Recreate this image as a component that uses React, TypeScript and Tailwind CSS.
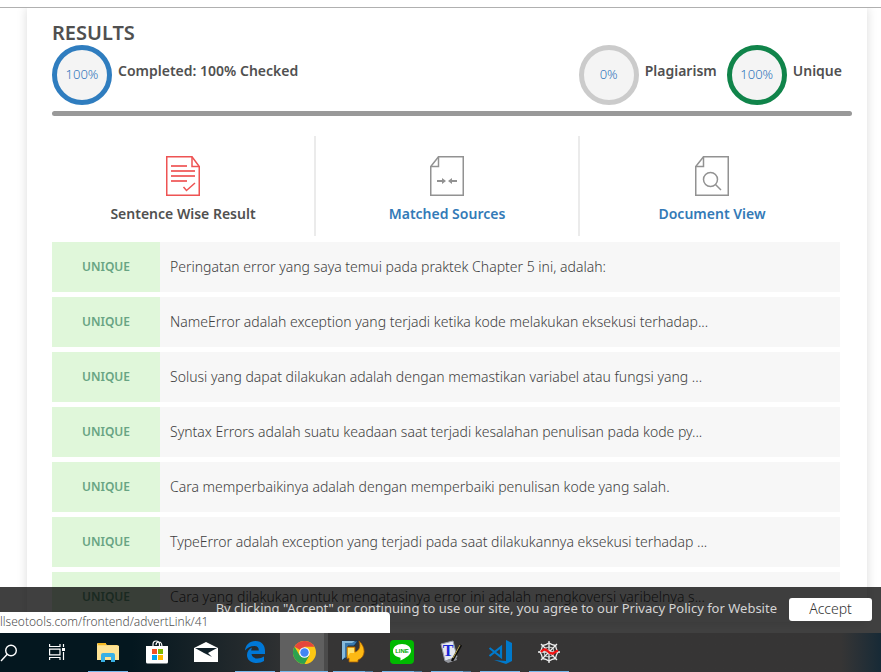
import type { ReactNode } from "react";

const sentences = [
  "Peringatan error yang saya temui pada praktek Chapter 5 ini, adalah:",
  "NameError adalah exception yang terjadi ketika kode melakukan eksekusi terhadap...",
  "Solusi yang dapat dilakukan adalah dengan memastikan variabel atau fungsi yang ...",
  "Syntax Errors adalah suatu keadaan saat terjadi kesalahan penulisan pada kode py...",
  "Cara memperbaikinya adalah dengan memperbaiki penulisan kode yang salah.",
  "TypeError adalah exception yang terjadi pada saat dilakukannya eksekusi terhadap ...",
  "Cara yang dilakukan untuk mengatasinya error ini adalah mengkoversi varibelnya s...",
];

function Gauge({ value, label, ring }: { value: string; label: string; ring: string }) {
  return (
    <div className="flex gap-1.5">
      <div
        className={`flex size-[60px] shrink-0 items-center justify-center rounded-full border-[5px] bg-[#f4f4f4] text-[13px] font-light text-[#2f74bb] ${ring}`}
      >
        {value}
      </div>
      <span className="pt-4 text-sm leading-5 font-semibold whitespace-nowrap text-[#505050]">{label}</span>
    </div>
  );
}

function SentenceIcon() {
  return (
    <svg width="34" height="40" viewBox="0 0 34 40" fill="none" stroke="#ee5353" strokeWidth="1.5" aria-hidden="true">
      <path d="M.75.75H26L33.25 10.5V39.25H.75Z" />
      <path d="M26 .75V10.5H33" />
      <path d="M5 10H21M5 15H29M5 20H29M5 25H21" strokeWidth="2" opacity=".85" />
      <path d="M17.5 31L20.5 34.5L29 27" />
    </svg>
  );
}

function MatchedIcon() {
  return (
    <svg width="34" height="40" viewBox="0 0 34 40" fill="none" stroke="#929292" strokeWidth="1.5" aria-hidden="true">
      <path d="M8.5.75H33.25V39.25H.75V10.5Z" />
      <path d="M8.5.75V10.5H1" />
      <path d="M7 25H13M21 25H27" strokeWidth="2" />
      <path d="M12 22L16 25L12 28ZM22 22L18 25L22 28Z" fill="#929292" stroke="none" />
    </svg>
  );
}

function ViewIcon() {
  return (
    <svg width="34" height="40" viewBox="0 0 34 40" fill="none" stroke="#929292" strokeWidth="1.5" aria-hidden="true">
      <path d="M8.5.75H33.25V39.25H.75V10.5Z" />
      <path d="M8.5.75V10.5H1" />
      <circle cx="15.5" cy="23.5" r="7" />
      <path d="M20.5 28.5L26 34" />
    </svg>
  );
}

function Tab({ icon, label, active, last }: { icon: ReactNode; label: string; active?: boolean; last?: boolean }) {
  return (
    <button
      type="button"
      className={`flex h-[100px] flex-col items-center gap-2 pt-5 ${last ? "" : "border-r-2 border-[#ebebeb]"} ${active ? "text-[#505050]" : "text-[#337ab7]"}`}
    >
      {icon}
      <span className="text-sm leading-5 font-semibold">{label}</span>
    </button>
  );
}

function SearchGlyph() {
  return (
    <svg width="18" height="18" viewBox="0 0 18 18" fill="none" stroke="#fff" strokeWidth="1.4">
      <circle cx="11" cy="6.5" r="5.3" />
      <path d="M7.2 10.3L1 17" />
    </svg>
  );
}

function TaskViewGlyph() {
  return (
    <svg width="20" height="16" viewBox="0 0 20 16" fill="none" stroke="#fff" strokeWidth="1.2">
      <path d="M.6 0V2.500H11V0M.6 16V13.500H11V16M.6 5.200H11V10.800H.6ZM14.500 0V3M14.500 8V16" />
      <path d="M13 4H16V7H13Z" fill="#fff" stroke="none" />
    </svg>
  );
}

function FolderGlyph() {
  return (
    <svg width="22" height="20" viewBox="0 0 22 20">
      <path d="M0 2Q0 1 1 1H8L10 3H20Q22 3 22 5V17H0Z" fill="#fbd978" />
      <path d="M1 1H9V3H1Z" fill="#f6b921" />
      <path d="M0 4H22V18H0Z" fill="#fee394" />
      <path d="M4 20V13Q4 11 6 11H16Q18 11 18 13V20H14V15H8V20Z" fill="#38b0e5" />
    </svg>
  );
}

function StoreGlyph() {
  return (
    <svg width="24" height="24" viewBox="0 0 24 24">
      <path d="M8 7V4.500Q8 1 11 1Q14.500 1 14.500 4.500V7M11 5Q11 2 14 2Q17 2 17 7" fill="none" stroke="#fff" strokeWidth="1.2" />
      <path d="M1 6H23V22Q23 23.500 21.500 23.500H2.500Q1 23.500 1 22Z" fill="#fff" />
      <path d="M7 9H12V14H7Z" fill="#f25022" />
      <path d="M13 9H18V14H13Z" fill="#7fba00" />
      <path d="M7 15H12V20H7Z" fill="#00a4ef" />
      <path d="M13 15H18V20H13Z" fill="#ffb900" />
    </svg>
  );
}

function MailGlyph() {
  return (
    <svg width="24" height="20" viewBox="0 0 24 20">
      <path d="M0 6L12 0L24 6V20H0Z" fill="#fff" />
      <path d="M1 6H23L14 11L18 15L10 11Z" fill="#102029" />
    </svg>
  );
}

function EdgeGlyph() {
  return (
    <svg width="22" height="22" viewBox="0 0 22 22">
      <path
        d="M1 9.500C1.500 4 5.500 0 11.500 0C18 0 21 4.500 21 10V13H7.500C8 16 10.500 17.500 13.500 17.500C16 17.500 18 16.800 20 15.600V20C18 21.300 15.500 22 12.500 22C6.500 22 3 18.500 3 14C3 10.500 5 8 8 6.500C7.500 7.500 7.200 8.500 7.200 9.500H14.800C14.800 6.500 13.500 5 10.500 5C6.500 5 3 7 1 9.500Z"
        fill="#0078d7"
      />
    </svg>
  );
}

function ChromeGlyph() {
  return (
    <svg width="23" height="23" viewBox="0 0 24 24">
      <circle cx="12" cy="12" r="12" fill="#fbc714" />
      <path d="M12 12L1.600 6A12 12 0 0 1 22.400 6H12Z" fill="#e5473b" />
      <path d="M1.600 6A12 12 0 0 0 12 24L17 15L12 12L7 15Z" fill="#2ca24f" />
      <circle cx="12" cy="12" r="5.600" fill="#fff" />
      <circle cx="12" cy="12" r="4.400" fill="#4286f4" />
    </svg>
  );
}

function TransferGlyph() {
  return (
    <svg width="24" height="24" viewBox="0 0 24 24">
      <path d="M1 1H17L13 6H7V17L1 20Z" fill="#3979ae" stroke="#14304c" />
      <path d="M1 1H14L11 3H4V17L1 20Z" fill="#85b9dc" />
      <path d="M6 7H14V12C18 11 20 7 18 1C25 7 25 17 17 20V22H8V18L6 19Z" fill="#fdb913" stroke="#a45a05" strokeWidth=".8" />
      <path d="M7 8H13V13H9L7 16Z" fill="#ffe06a" />
    </svg>
  );
}

function LineGlyph() {
  return (
    <svg width="24" height="24" viewBox="0 0 24 24">
      <rect width="24" height="24" rx="4" fill="#00b900" />
      <path d="M12 4C6.500 4 3 7 3 11C3 14.500 6 17 10.500 17.700V20.500C16 18 21 14.500 21 11C21 7 17.500 4 12 4Z" fill="#fff" />
      <text x="12" y="13" textAnchor="middle" fontSize="6" fontWeight="800" fill="#00a900" fontFamily="Liberation Sans, sans-serif">
        LINE
      </text>
    </svg>
  );
}

function TextGlyph() {
  return (
    <svg width="24" height="24" viewBox="0 0 24 24">
      <path d="M2 4L14 1L18 17L6 21Z" fill="#e4e7ef" stroke="#9599a5" />
      <path d="M6 21L17 17L18 20L9 23Z" fill="#92959c" />
      <text x="9" y="16" textAnchor="middle" fontSize="16" fontWeight="700" fill="#1825d7" fontFamily="Liberation Serif, serif">
        T
      </text>
      <path d="M22 5L13 21" stroke="#0c0c0c" strokeWidth="2.500" />
      <path d="M21 5L14 18" stroke="#b5a04c" />
    </svg>
  );
}

function CodeGlyph() {
  return (
    <svg width="24" height="24" viewBox="0 0 24 24">
      <path d="M18 0L24 3V21L18 24L6 20L18 21Z" fill="#0079cb" />
      <path d="M1.500 8L13 17V7L1.500 16" fill="none" stroke="#0079cb" strokeWidth="2.200" />
    </svg>
  );
}

function WebGlyph() {
  return (
    <svg width="24" height="24" viewBox="0 0 24 24" fill="none" stroke="#eee" strokeWidth="1.300">
      <path d="M12 1V23M1 12H23M4 4L20 20M20 4L4 20" />
      <path d="M12 3Q15 5 18.500 5.500Q19 9 21 12Q19 15 18.500 18.500Q15 19 12 21Q9 19 5.500 18.500Q5 15 3 12Q5 9 5.500 5.500Q9 5 12 3Z" />
      <path d="M12 7L16 8L17 12L16 16L12 17L8 16L7 12L8 8Z" strokeWidth=".8" />
      <path d="M4 12Q7 8 10 10.500Q13 14 16 13.500Q18 12 21 10.500" stroke="#f01414" strokeWidth="2.400" />
    </svg>
  );
}

const tasks: { name: string; icon: ReactNode; state: "idle" | "open" | "active" | "stack" }[] = [
  { name: "Task view", icon: <TaskViewGlyph />, state: "idle" },
  { name: "File Explorer", icon: <FolderGlyph />, state: "open" },
  { name: "Store", icon: <StoreGlyph />, state: "idle" },
  { name: "Mail", icon: <MailGlyph />, state: "idle" },
  { name: "Edge", icon: <EdgeGlyph />, state: "open" },
  { name: "Chrome", icon: <ChromeGlyph />, state: "active" },
  { name: "File transfer", icon: <TransferGlyph />, state: "stack" },
  { name: "LINE", icon: <LineGlyph />, state: "stack" },
  { name: "Text editor", icon: <TextGlyph />, state: "stack" },
  { name: "Visual Studio Code", icon: <CodeGlyph />, state: "open" },
  { name: "Spyder", icon: <WebGlyph />, state: "open" },
];

const taskStyle = {
  idle: "",
  open: "",
  active: "bg-[linear-gradient(to_right,#606060_44px,#4b4b4b_44px)]",
  stack: "",
};

const lineStyle = {
  idle: "h-px w-0",
  open: "h-px w-10 bg-[#76b9ed]",
  active: "h-px w-full bg-[#76b9ed]",
  stack: "h-px w-10 border-r-8 border-[#4f7ea2] bg-[#76b9ed]",
};

export default function App() {
  return (
    <div className="flex h-screen flex-col overflow-hidden bg-white font-['Noto_Sans','Open_Sans',sans-serif]">
      <div className="relative flex min-h-0 flex-1 flex-col overflow-hidden pt-[7px]">
        <main className="min-h-0 flex-1 overflow-hidden border-t border-[#b0b0b0]">
          <section className="mr-3.5 ml-[27px] pt-3 pr-[15px] pl-[25px] shadow-[0_0_10px_rgba(0,0,0,0.15)]">
            <h1 className="h-[25px] text-xl leading-[26px] font-semibold text-[#505050]">RESULTS</h1>
            <div className="flex justify-between">
              <Gauge value="100%" label="Completed: 100% Checked" ring="border-[#2f7dbf]" />
              <div className="flex gap-2.5 pr-2.5">
                <Gauge value="0%" label="Plagiarism" ring="border-[#cbcbcb]" />
                <Gauge value="100%" label="Unique" ring="border-[#10844a]" />
              </div>
            </div>
            <div className="mt-1.5 h-[5px] rounded-sm bg-[#999]" />

            <div className="mt-5 mr-2 grid grid-cols-3">
              <Tab icon={<SentenceIcon />} label="Sentence Wise Result" active />
              <Tab icon={<MatchedIcon />} label="Matched Sources" />
              <Tab icon={<ViewIcon />} label="Document View" last />
            </div>

            <ul className="mt-1.5 mr-3 flex flex-col gap-[5px]">
              {sentences.map((sentence) => (
                <li key={sentence} className="flex h-[50px] items-center bg-[#f7f7f7]">
                  <span className="flex h-full w-[108px] shrink-0 items-center justify-center bg-[#e0f7da] text-xs font-semibold text-[#68a483]">
                    UNIQUE
                  </span>
                  <span className="truncate pl-2.5 text-sm font-[350] text-[#404040]">{sentence}</span>
                </li>
              ))}
            </ul>
          </section>
        </main>

        <div className="absolute inset-x-0 bottom-0 flex h-[46px] items-center justify-end gap-3 bg-black/75 pr-[9px] pb-0.5">
          <p className="text-[13px] whitespace-nowrap text-[#d4d4d4]">
            By clicking "Accept" or continuing to use our site, you agree to our Privacy Policy for Website
          </p>
          <button type="button" className="h-[23px] w-[83px] shrink-0 rounded-[3px] bg-white text-sm leading-5 font-light text-[#333]">
            Accept
          </button>
        </div>

        <div className="absolute bottom-0 left-0 h-[21px] w-[390px] rounded-tr bg-white text-xs leading-5 font-light text-[#505050]">
          llseotools.com/frontend/advertLink/41
        </div>
      </div>

      <nav
        aria-label="Taskbar"
        className="flex h-[39px] shrink-0 gap-px bg-linear-to-r from-[#04171f] from-15% via-[#363535] via-35% to-[#363535] to-90%"
      >
        <button type="button" aria-label="Search" className="flex h-full w-[34px] items-center justify-start">
          <SearchGlyph />
        </button>
        {tasks.map((task) => (
          <button
            key={task.name}
            type="button"
            aria-label={task.name}
            className={`flex h-full w-12 shrink-0 flex-col items-center ${taskStyle[task.state]}`}
          >
            <span className="flex flex-1 items-center justify-center">{task.icon}</span>
            <span className={lineStyle[task.state]} />
          </button>
        ))}
        <div className="ml-auto w-10 bg-linear-to-r from-[#363535] to-[#172a36]" />
      </nav>
    </div>
  );
}
